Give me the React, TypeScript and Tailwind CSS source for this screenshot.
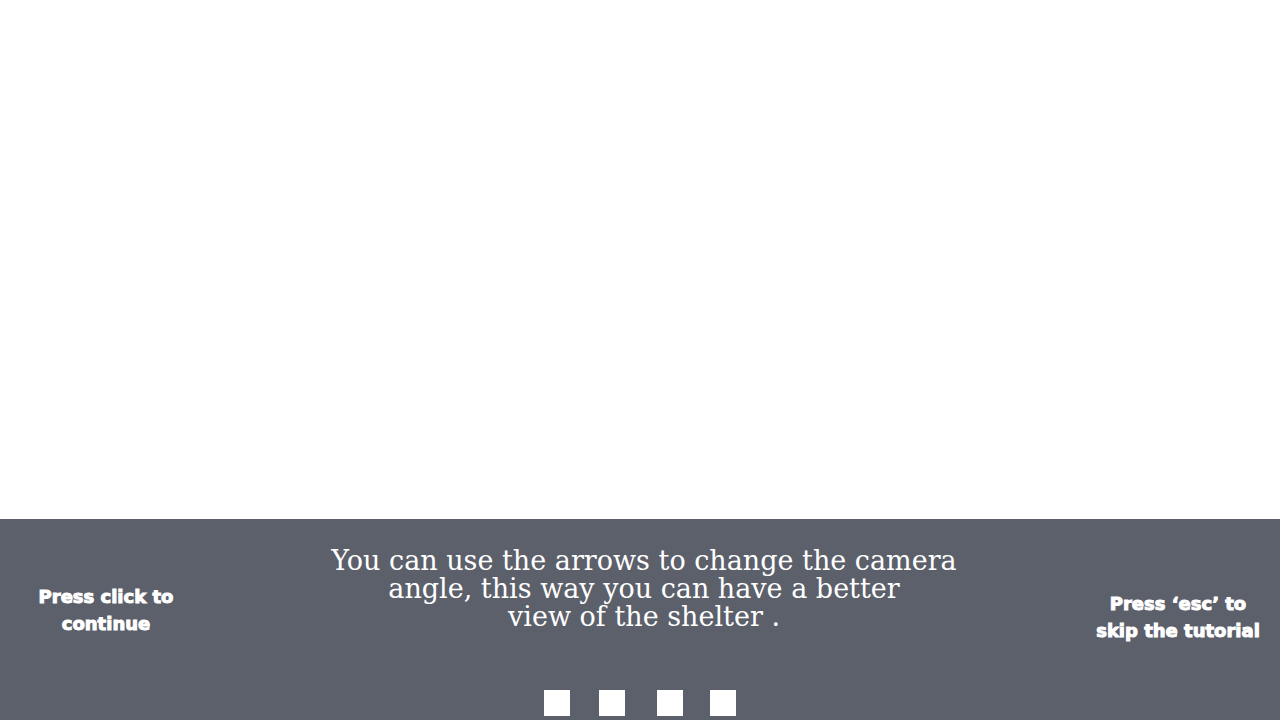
export default function App() {
  return (
    <div className="flex min-h-screen flex-col bg-white">
      <main className="grow" />
      <footer className="flex flex-col bg-[#5c606b] pb-1 text-white">
        <div className="grid grid-cols-[212px_1fr_204px] pt-7">
          <p className="pt-9 text-center font-['DejaVu_Sans',sans-serif] text-lg leading-[27px] font-black [-webkit-text-stroke:1px_white]">
            Press click to
            <br />
            continue
          </p>
          <p className="text-center font-['DejaVu_Serif',serif] text-[27px] leading-7 whitespace-nowrap">
            You can use the arrows to change the camera
            <br />
            angle, this way you can have a better
            <br />
            view of the shelter .
          </p>
          <p className="pt-[43px] text-center font-['DejaVu_Sans',sans-serif] text-lg leading-[27px] font-black [-webkit-text-stroke:1px_white]">
            Press ‘esc’ to
            <br />
            skip the tutorial
          </p>
        </div>
        <div className="mt-[46px] flex justify-center">
          <span className="mr-[29px] size-[26px] bg-white" />
          <span className="mr-8 size-[26px] bg-white" />
          <span className="mr-[27px] size-[26px] bg-white" />
          <span className="size-[26px] bg-white" />
        </div>
      </footer>
    </div>
  );
}
